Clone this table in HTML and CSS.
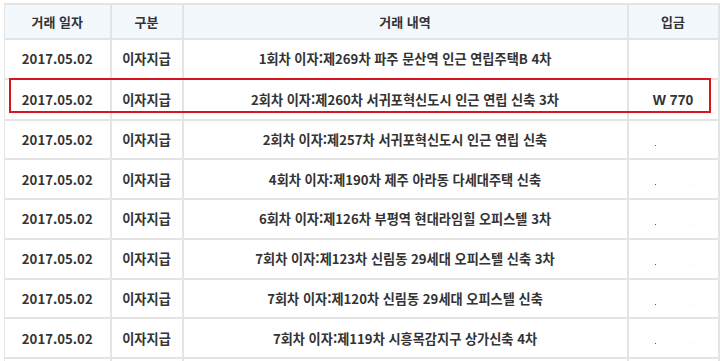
FILE: index.html
```html
<!DOCTYPE html>
<html lang="ko">
<head>
<meta charset="utf-8">
<link rel="stylesheet" href="styles.css">
</head>
<body>
<div class="wrap">
  <table class="list">
    <colgroup>
      <col class="c-date"><col class="c-type"><col class="c-desc"><col class="c-amt">
    </colgroup>
    <thead>
      <tr><th>거래 일자</th><th>구분</th><th>거래 내역</th><th>입금</th></tr>
    </thead>
    <tbody>
      <tr><td>2017.05.02</td><td>이자지급</td><td>1회차 이자:제269차 파주 문산역 인근 연립주택B 4차</td><td></td></tr>
      <tr><td>2017.05.02</td><td>이자지급</td><td>2회차 이자:제260차 서귀포혁신도시 인근 연립 신축 3차</td><td class="amt">W 770</td></tr>
      <tr><td>2017.05.02</td><td>이자지급</td><td>2회차 이자:제257차 서귀포혁신도시 인근 연립 신축</td><td class="amt-dots"><span class="dot"></span><span class="dot light"></span></td></tr>
      <tr><td>2017.05.02</td><td>이자지급</td><td>4회차 이자:제190차 제주 아라동 다세대주택 신축</td><td class="amt-dots"><span class="dot"></span><span class="dot light"></span></td></tr>
      <tr><td>2017.05.02</td><td>이자지급</td><td>6회차 이자:제126차 부평역 현대라임힐 오피스텔 3차</td><td class="amt-dots"><span class="dot"></span><span class="dot light"></span></td></tr>
      <tr><td>2017.05.02</td><td>이자지급</td><td>7회차 이자:제123차 신림동 29세대 오피스텔 신축 3차</td><td class="amt-dots"><span class="dot"></span><span class="dot light"></span></td></tr>
      <tr><td>2017.05.02</td><td>이자지급</td><td>7회차 이자:제120차 신림동 29세대 오피스텔 신축</td><td class="amt-dots"><span class="dot"></span><span class="dot light"></span></td></tr>
      <tr><td>2017.05.02</td><td>이자지급</td><td>7회차 이자:제119차 시흥목감지구 상가신축 4차</td><td class="amt-dots"><span class="dot"></span><span class="dot light"></span></td></tr>
      <tr class="tail"><td></td><td></td><td></td><td></td></tr>
    </tbody>
  </table>
  <div class="highlight"></div>
</div>
</body>
</html>
```

FILE: styles.css
```css
html, body {
  margin: 0;
  padding: 0;
  background: #fff;
  overflow: hidden;
}
body {
  font-family: "Noto Sans CJK KR", "Noto Sans", sans-serif;
  color: #333;
}
.wrap {
  position: relative;
  padding: 3px 0 0 4px;
}
.list {
  border-collapse: collapse;
  table-layout: fixed;
  width: 714px;
  font-size: 13px;
}
.c-date { width: 106px; }
.c-type { width: 72px; }
.c-desc { width: 445px; }
.c-amt { width: 91px; }
.list th, .list td {
  border: 2px solid #e4e4e4;
  text-align: center;
  vertical-align: middle;
  padding: 0;
  white-space: nowrap;
  overflow: hidden;
}
.list th {
  height: 33px;
  background: #f3f8fd;
  font-weight: 700;
  color: #333;
}
.list td {
  height: 37.75px;
  font-weight: 700;
  font-size: 13.2px;
  color: #333;
}
.list th:first-child, .list td:first-child { border-left-width: 1px; }
.list td.amt {
  font-family: "Liberation Sans", Arial, sans-serif;
  font-size: 14px;
  padding-top: 1px;
}
.amt-dots { position: relative; }
.dot {
  position: absolute;
  top: 24px;
  left: 26px;
  width: 1px;
  height: 1px;
  background: #9a4a1c;
}
.dot.light {
  left: 61px;
  background: #e6e6e6;
}
.highlight {
  position: absolute;
  left: 9px;
  top: 78px;
  width: 698px;
  height: 31px;
  border: 2px solid #d6151e;
  pointer-events: none;
}
```
